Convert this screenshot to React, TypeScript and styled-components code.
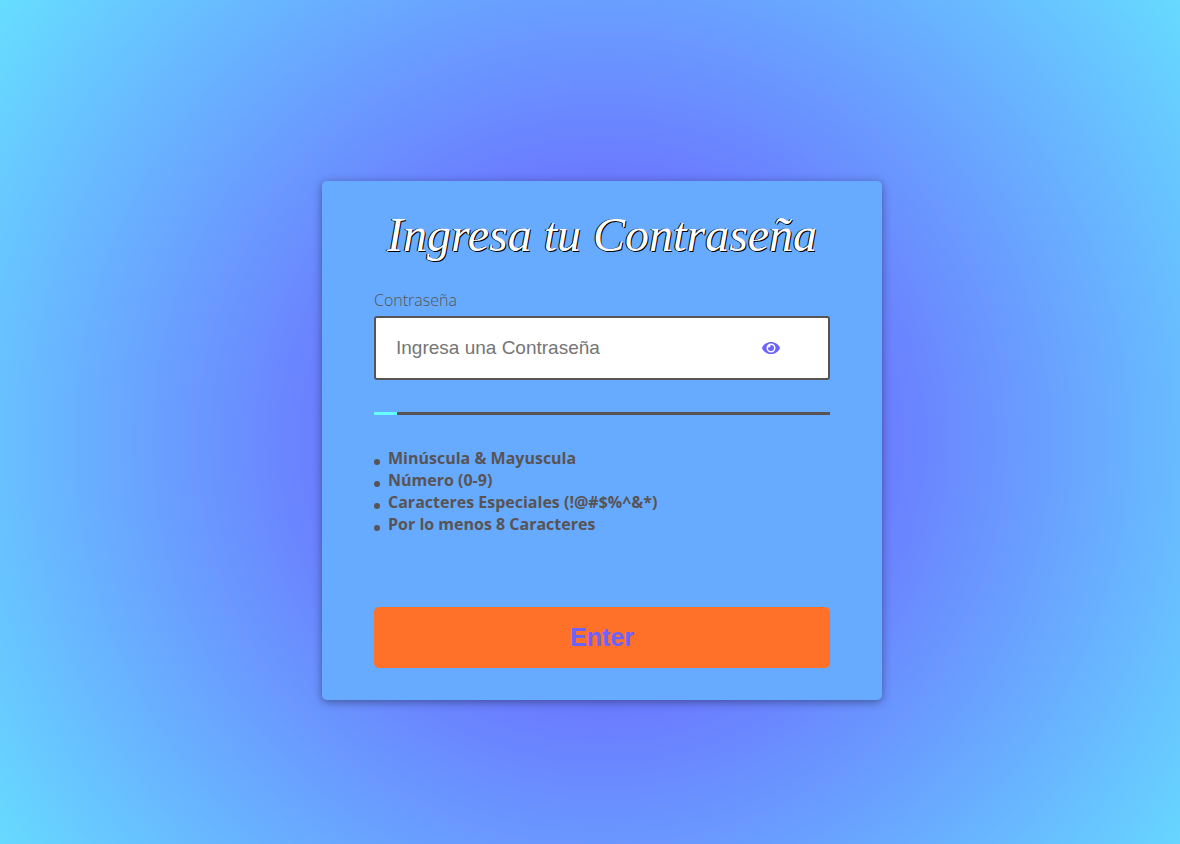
import React, { useState } from "react";
import styled, { createGlobalStyle } from "styled-components";
import { FaEye, FaEyeSlash } from "react-icons/fa";

const GlobalStyle = createGlobalStyle`
  *, *::before, *::after { box-sizing: border-box; }
  body { margin: 0; font-family: "Open Sans", sans-serif; color: #595353; }
`;

const Page = styled.main`
  min-height: 100vh;
  display: flex;
  align-items: center;
  justify-content: center;
  padding: 37px 0 0 24px;
  background: radial-gradient(circle at calc(50% + 12px) calc(50% + 18px), #6c63ff 20%, #66deff);
`;

const Card = styled.form`
  width: 560px;
  max-width: 100%;
  padding: 32px 52px;
  display: flex;
  flex-direction: column;
  background: #66abff;
  border-radius: 5px;
  box-shadow: 0 2px 10px rgba(0, 0, 0, 0.4);
`;

const Title = styled.h1`
  margin: 0 0 32px;
  font: italic 400 48px/44px "Liberation Serif", serif;
  color: #fff;
  text-align: center;
  white-space: nowrap;
  text-shadow: 1px 1px 0 #000, -1px 0 0 #000;
`;

const Label = styled.label`
  font-size: 16px;
  font-weight: 350;
  line-height: 22px;
  margin-bottom: 5px;
`;

const Field = styled.div`
  display: flex;
  align-items: center;
  height: 64px;
  padding: 0 48px 0 20px;
  background: #fff;
  border: 2px solid #595353;
  border-radius: 3px;
`;

const Input = styled.input`
  flex: 1;
  min-width: 0;
  padding: 0;
  border: 0;
  outline: 0;
  background: transparent;
  font: 19px "Liberation Sans", sans-serif;
  &::placeholder { color: #757575; }
`;

const Toggle = styled.button`
  display: flex;
  padding: 0;
  border: 0;
  background: none;
  color: #6c63ff;
  cursor: pointer;
`;

const Track = styled.div`
  height: 3px;
  margin: 32px 0;
  background: #595353;
`;

const Bar = styled.div<{ $level: number }>`
  width: ${(p) => 5 + p.$level * 23.75}%;
  height: 100%;
  background: #66ffff;
`;

const Rules = styled.ul`
  margin: 0 0 72px;
  padding: 0;
  list-style: none;
`;

const Rule = styled.li`
  display: flex;
  align-items: center;
  gap: 8px;
  font-size: 16px;
  font-weight: 700;
  line-height: 22px;
  &::before {
    content: "";
    width: 6px;
    height: 6px;
    margin-top: 8px;
    border-radius: 50%;
    background: currentColor;
  }
`;

const Submit = styled.button`
  height: 61px;
  padding: 0;
  border: 0;
  border-radius: 5px;
  background: #ff7029;
  color: #6c63ff;
  font: 700 25px "Liberation Sans", sans-serif;
  cursor: pointer;
`;

const rules = [
  { text: "Minúscula & Mayuscula", test: (v: string) => /[a-z]/.test(v) && /[A-Z]/.test(v) },
  { text: "Número (0-9)", test: (v: string) => /\d/.test(v) },
  { text: "Caracteres Especiales (!@#$%^&*)", test: (v: string) => /[!@#$%^&*]/.test(v) },
  { text: "Por lo menos 8 Caracteres", test: (v: string) => v.length >= 8 },
];

export default function App() {
  const [value, setValue] = useState("");
  const [shown, setShown] = useState(false);
  const level = rules.filter((r) => r.test(value)).length;

  return (
    <Page>
      <GlobalStyle />
      <Card onSubmit={(e) => e.preventDefault()}>
        <Title>Ingresa tu Contraseña</Title>
        <Label htmlFor="password">Contraseña</Label>
        <Field>
          <Input
            id="password"
            type={shown ? "text" : "password"}
            placeholder="Ingresa una Contraseña"
            value={value}
            onChange={(e) => setValue(e.target.value)}
          />
          <Toggle type="button" aria-label="Mostrar contraseña" onClick={() => setShown(!shown)}>
            {shown ? <FaEyeSlash size={18} /> : <FaEye size={18} />}
          </Toggle>
        </Field>
        <Track>
          <Bar $level={level} />
        </Track>
        <Rules>
          {rules.map((r) => (
            <Rule key={r.text}>{r.text}</Rule>
          ))}
        </Rules>
        <Submit type="submit">Enter</Submit>
      </Card>
    </Page>
  );
}
